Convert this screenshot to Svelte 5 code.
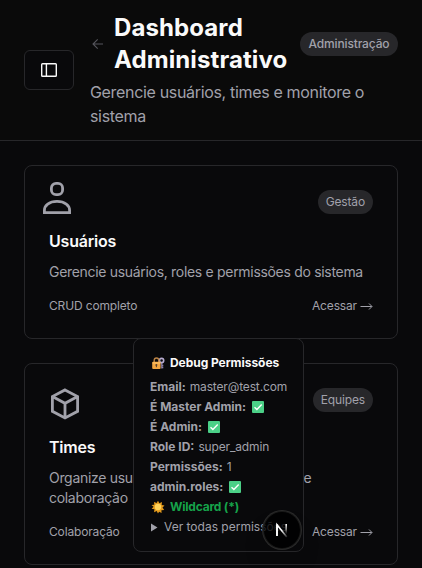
<script>
  const cards = [
    { icon: 'user', badge: 'Gestão', title: 'Usuários', lines: ['Gerencie usuários, roles e permissões do sistema'], note: 'CRUD completo' },
    { icon: 'box', badge: 'Equipes', title: 'Times', lines: ['Organize usuários em equipes, projetos e', 'colaboração'], note: 'Colaboração' }
  ];
  const rows = [
    { label: 'Email:', value: 'master@test.com' },
    { label: 'É Master Admin:', ok: true },
    { label: 'É Admin:', ok: true },
    { label: 'Role ID:', value: 'super_admin' },
    { label: 'Permissões:', value: '1' },
    { label: 'admin.roles:', ok: true }
  ];
</script>

<div class="page">
  <header>
    <button class="toggle" aria-label="Menu">
      <svg width="16" height="16" viewBox="0 0 16 16" fill="none" stroke="#fafafa" stroke-width="1.4"><rect x=".7" y="1.7" width="14.6" height="12.6" rx=".8" /><path d="M5.4 2v12" /></svg>
    </button>
    <div class="heading">
      <div class="title-row">
        <svg class="back" width="16" height="16" viewBox="0 0 16 16" fill="none" stroke="#55555c" stroke-width="1.1"><path d="M13 8H3.4M7.7 3.3L3 8l4.7 4.7" /></svg>
        <h1>Dashboard Administrativo</h1>
        <span class="badge strong">Administração</span>
      </div>
      <p>Gerencie usuários, times e monitore o<br />sistema</p>
    </div>
  </header>

  <main>
    {#each cards as card}
      <section class="card">
        <div class="top {card.icon}">
          {#if card.icon === 'user'}
            <svg width="28" height="32" viewBox="0 0 28 32" fill="none" stroke="#a1a1aa" stroke-width="2.8"><rect x="8.4" y="1.4" width="11.2" height="11.2" rx="4.6" /><path d="M1.4 30.6v-2.4C1.4 23.5 6 19.4 14 19.4S26.6 23.5 26.6 28.2v2.4z" /></svg>
          {:else}
            <svg width="32" height="32" viewBox="0 0 32 32" fill="none" stroke="#a1a1aa" stroke-width="2.8"><path d="M16 1.9l12.6 6.6v14.8L16 30 3.4 23.3V8.5zM3.4 8.5L16 15.3l12.6-6.8M16 15.3V30" /></svg>
          {/if}
          <span class="badge">{card.badge}</span>
        </div>
        <h2>{card.title}</h2>
        <p class="desc">{#each card.lines as line}<span>{line}</span>{/each}</p>
        <div class="foot"><span class="note">{card.note}</span><span class="go">Acessar <svg width="13" height="10" viewBox="0 0 13 10" fill="none" stroke="#a1a1aa"><path d="M.5 5.5h11.3M9 2.5l3 3-3 3" /></svg></span></div>
      </section>
    {/each}
  </main>

  <aside>
    <h3>
      <svg width="14" height="14" viewBox="0 0 14 14"><path d="M10.8 7v5.5M10.8 9.5h1.5M10.8 11.5h1.5" stroke="#8e82a8" stroke-width="1.3" fill="none" /><circle cx="10.6" cy="4.5" r="2.1" fill="none" stroke="#b8acd0" stroke-width="1.6" /><path d="M3.2 7V4.3a2.3 2.3 0 014.6 0V7" fill="none" stroke="#b98245" stroke-width="1.4" /><rect x="1.2" y="5.8" width="8.4" height="7.2" rx="1" fill="#f2a541" /><path d="M1.5 7h7.8" stroke="#ffc56b" /><circle cx="5.4" cy="8.9" r="1" fill="#54402f" /><path d="M5.4 9v2.2" stroke="#54402f" /></svg>
      <span>Debug Permissões</span>
    </h3>
    {#each rows as row}
      <div class="row"><b>{row.label}</b>{#if row.ok}<svg class="check" width="12" height="12" viewBox="0 0 12 12"><rect width="12" height="12" rx="1" fill="#4bd087" /><path d="M2.5 6.2l2.4 2.3 4.8-5" fill="none" stroke="#fff" stroke-width="1.4" /></svg>{:else}<span>{row.value}</span>{/if}</div>
    {/each}
    <div class="row wild">
      <svg width="14" height="14" viewBox="0 0 14 14"><path d="M7 .8l1.4 2.4L11 2l-.3 2.9 2.8.7-2 2 1.7 2.3-2.8.3.2 2.9-2.5-1.3L7 13.4l-1.3-2.5-2.6 1.3.3-2.9-2.8-.5 2-2L.5 4.9l2.8-.2L3 1.9l2.6 1.2z" fill="#e39a1c" /><circle cx="7" cy="7" r="3.2" fill="#ffd35a" /></svg>
      <b>Wildcard (*)</b>
    </div>
    <div class="row more"><svg width="9" height="9" viewBox="0 0 9 9"><path d="M1 .5l6.5 4L1 8.5z" fill="#a1a1aa" /></svg><span>Ver todas permissões</span></div>
  </aside>

  <div class="next" aria-label="Next.js">
    <svg width="36" height="36" viewBox="0 0 36 36" fill="none"><defs><linearGradient id="diag" x1="18" y1="18" x2="23.5" y2="25" gradientUnits="userSpaceOnUse"><stop stop-color="#fff" /><stop offset="1" stop-color="#fff" stop-opacity=".1" /></linearGradient><linearGradient id="stem" x1="0" y1="12" x2="0" y2="22" gradientUnits="userSpaceOnUse"><stop stop-color="#fff" /><stop offset="1" stop-color="#fff" stop-opacity="0" /></linearGradient></defs><path d="M13 24V12.8L22.8 25" stroke="url(#diag)" stroke-width="1.6" /><path d="M13 24V12.5" stroke="#fff" stroke-width="1.6" /><path d="M22.2 12v10" stroke="url(#stem)" stroke-width="1.6" /></svg>
  </div>
</div>

<style>
  :global(body) { margin: 0; background: #09090b; }
  .page { position: relative; width: 422px; height: 568px; overflow: hidden; background: #09090b; color: #a1a1aa; font-family: Inter, "Liberation Sans", sans-serif; font-size: 12px; line-height: 16px; letter-spacing: -0.15px; box-sizing: border-box; }
  h1, h2, h3, p { margin: 0; }
  svg { display: block; flex: none; }
  header { display: flex; align-items: center; gap: 16px; height: 140px; padding: 0 24px; border-bottom: 1px solid #27272a; background: #0a0a0a; white-space: nowrap; }
  .toggle { display: flex; align-items: center; justify-content: center; width: 50px; height: 40px; padding: 0; flex: none; box-sizing: border-box; border: 1px solid #27272a; border-radius: 6px; background: #09090b; }
  .heading { flex: 1; min-width: 0; }
  .title-row { display: flex; align-items: center; }
  h1 { width: 178px; margin: 0 8px; flex: none; white-space: normal; color: #fafafa; font-size: 24px; line-height: 32px; font-weight: 700; letter-spacing: 0.1px; }
  .heading p { margin-top: 4px; font-size: 16px; line-height: 24px; letter-spacing: -0.33px; }
  .badge { display: flex; align-items: center; justify-content: center; box-sizing: border-box; height: 24px; padding: 0 8px; border-radius: 12px; background: #27272a; white-space: nowrap; }
  .strong { width: 98px; font-weight: 500; }
  main { display: flex; flex-direction: column; gap: 24px; padding: 24px; }
  .card { box-sizing: border-box; border: 1px solid #27272a; border-radius: 8px; padding: 24px; }
  .top { display: flex; justify-content: space-between; align-items: flex-start; height: 32px; }
  .top.user { height: 24px; }
  .top.user svg { margin: -8px 0 0 -6px; }
  h2 { margin-top: 15px; color: #fafafa; font-size: 16px; line-height: 24px; font-weight: 600; letter-spacing: -0.2px; }
  .desc { margin-top: 9px; font-size: 14px; line-height: 20px; letter-spacing: -0.31px; white-space: nowrap; }
  .desc span { display: block; }
  .foot { display: flex; justify-content: space-between; margin-top: 16px; }
  .go { display: flex; align-items: center; gap: 3px; }
  aside { position: absolute; left: 133px; top: 338px; width: 171px; height: 214px; box-sizing: border-box; padding: 16px; border: 1px solid #27272a; border-radius: 8px; background: #09090b; white-space: nowrap; }
  h3 { display: flex; align-items: center; gap: 5px; margin-bottom: 8px; padding-left: 1px; color: #fafafa; font-size: 12px; line-height: 16px; font-weight: 700; letter-spacing: -0.05px; }
  .row { display: flex; align-items: center; gap: 4px; height: 16px; margin-bottom: 4px; }
  .row b { font-weight: 700; letter-spacing: 0; }
  .row .check { margin-left: 2px; }
  .wild { gap: 5px; padding-left: 1px; color: #16a34a; }
  .wild b { letter-spacing: -0.2px; }
  .more { letter-spacing: 0; gap: 5px; }
  .next { position: absolute; left: 264px; top: 512px; width: 36px; height: 36px; border-radius: 50%; background: rgba(0, 0, 0, .8); box-shadow: 0 0 0 1px #171717, 0 0 0 2px #2a2a2a, 0 16px 32px -8px rgba(0, 0, 0, .24); }
</style>
